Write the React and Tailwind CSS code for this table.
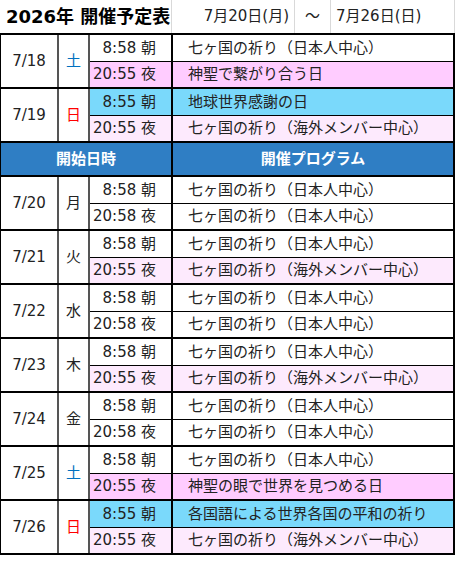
const FONT = { fontFamily: '"DejaVu Sans", "Noto Sans CJK JP", sans-serif' };

const W = "bg-white";
const P = "bg-[#ffccff]";
const L = "bg-[#fdeafd]";
const C = "bg-[#7ad9fb]";

const JP = "七ヶ国の祈り（日本人中心）";
const KG = "七ヶ国の祈り（海外メンバー中心）";

const before = [
  {
    date: "7/18",
    day: "土",
    dayColor: "text-[#0070c0]",
    rows: [
      ["8:58 朝", JP, W],
      ["20:55 夜", "神聖で繋がり合う日", P],
    ],
  },
  {
    date: "7/19",
    day: "日",
    dayColor: "text-[#ff0000]",
    rows: [
      ["8:55 朝", "地球世界感謝の日", C],
      ["20:55 夜", KG, L],
    ],
  },
];

const week = [
  { date: "7/20", day: "月", rows: [["8:58 朝", JP, W], ["20:58 夜", JP, W]] },
  { date: "7/21", day: "火", rows: [["8:58 朝", JP, W], ["20:55 夜", KG, L]] },
  { date: "7/22", day: "水", rows: [["8:58 朝", JP, W], ["20:58 夜", JP, W]] },
  { date: "7/23", day: "木", rows: [["8:58 朝", JP, W], ["20:55 夜", KG, L]] },
  { date: "7/24", day: "金", rows: [["8:58 朝", JP, W], ["20:58 夜", JP, W]] },
  {
    date: "7/25",
    day: "土",
    dayColor: "text-[#0070c0]",
    rows: [
      ["8:58 朝", JP, W],
      ["20:55 夜", "神聖の眼で世界を見つめる日", P],
    ],
  },
  {
    date: "7/26",
    day: "日",
    dayColor: "text-[#ff0000]",
    rows: [
      ["8:55 朝", "各国語による世界各国の平和の祈り", C],
      ["20:55 夜", KG, L],
    ],
  },
];

function Group({ g }) {
  return (
    <div className="flex border-b-2 border-black">
      <div className="flex w-[58px] items-center justify-center border-r-2 border-[#555] text-[15px] leading-none">
        {g.date}
      </div>
      <div
        className={[
          "flex w-[31px] items-center justify-center border-r-2 border-[#555] text-[15px] leading-none",
          g.dayColor || "",
        ].join(" ")}
      >
        {g.day}
      </div>
      <div className="flex flex-1 flex-col">
        {g.rows.map((r, i) => (
          <div
            key={i}
            className={[
              "flex",
              i === 0 ? "h-[27px] border-b border-black" : "h-[25px]",
              r[2],
            ].join(" ")}
          >
            <div className="flex w-[83px] items-center justify-end border-r-2 border-black pr-[15px] text-[15px] leading-none">
              {r[0]}
            </div>
            <div className="flex flex-1 items-center pl-[15px] text-[15px] leading-none whitespace-nowrap">
              {r[1]}
            </div>
          </div>
        ))}
      </div>
    </div>
  );
}

export default function App() {
  return (
    <div className="h-[563px] w-[458px] bg-white text-[#222]" style={FONT}>
      {/* 見出し行 */}
      <div className="flex h-[33px] w-[455px]">
        <div className="flex w-[172px] items-center border-r border-[#d9d9d9] pl-[6px] text-[18px] font-bold leading-none text-black">
          2026年 開催予定表
        </div>
        <div className="flex w-[123px] items-center justify-end border-r border-[#d9d9d9] pr-[5px] text-[15px] leading-none">
          7月20日(月)
        </div>
        <div className="flex w-[36px] items-center justify-center border-r border-[#d9d9d9] text-[15px] leading-none">
          ～
        </div>
        <div className="flex flex-1 items-center border-r border-[#d9d9d9] pl-[5px] text-[15px] leading-none">
          7月26日(日)
        </div>
      </div>

      <div className="w-[455px] border-t-2 border-r-2 border-l border-black">
        {before.map((g) => (
          <Group key={g.date} g={g} />
        ))}

        <div className="flex h-[34px] border-b-2 border-black bg-[#2f7ec4] text-[15px] font-bold leading-none text-white">
          <div className="flex w-[172px] items-center justify-center border-r-2 border-black">開始日時</div>
          <div className="flex flex-1 items-center justify-center">開催プログラム</div>
        </div>

        {week.map((g) => (
          <Group key={g.date} g={g} />
        ))}
      </div>
    </div>
  );
}
